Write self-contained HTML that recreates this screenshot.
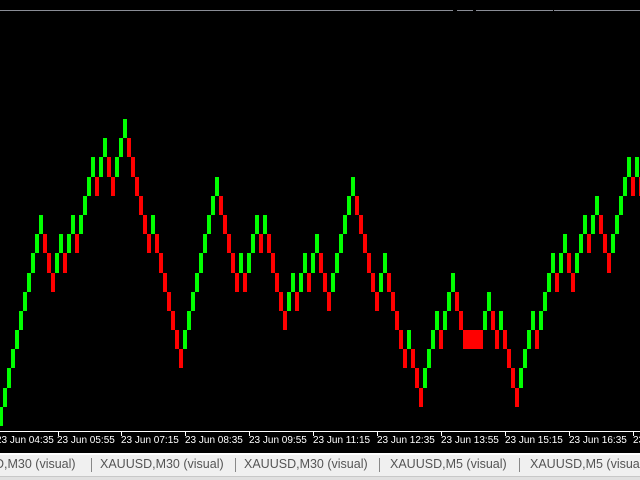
<!DOCTYPE html>
<html><head><meta charset="utf-8"><style>
html,body{margin:0;padding:0;background:#000;width:640px;height:480px;overflow:hidden;position:relative;font-family:"Liberation Sans",sans-serif}
.b{position:absolute;width:4px}
.g{background:#00ff00}.r{background:#ff0000}
.lbl{position:absolute;top:435px;color:#fff;font-size:10px;white-space:nowrap}
.tk{position:absolute;top:432px;width:1px;height:4px;background:#fff}
.tab{position:absolute;top:457px;color:#555;font-size:12.5px;white-space:nowrap}
.sep{position:absolute;top:458px;width:1px;height:14px;background:#888}
</style></head><body>
<div style="position:absolute;left:0;top:10px;width:640px;height:1px;background:#8a8d96"></div>
<div style="position:absolute;left:453px;top:10px;width:4px;height:1px;background:#000"></div>
<div style="position:absolute;left:473px;top:10px;width:3px;height:1px;background:#000"></div>
<div style="position:absolute;left:553px;top:10px;width:1px;height:1px;background:#000"></div>
<div id="c"></div>
<div style="position:absolute;left:0;top:431px;width:640px;height:1px;background:#fff"></div>
<div class="lbl" style="left:-4px">23 Jun 04:35</div>
<div class="tk" style="left:58px"></div><div class="lbl" style="left:57px">23 Jun 05:55</div>
<div class="tk" style="left:121px"></div><div class="lbl" style="left:121px">23 Jun 07:15</div>
<div class="tk" style="left:185px"></div><div class="lbl" style="left:185px">23 Jun 08:35</div>
<div class="tk" style="left:249px"></div><div class="lbl" style="left:249px">23 Jun 09:55</div>
<div class="tk" style="left:313px"></div><div class="lbl" style="left:313px">23 Jun 11:15</div>
<div class="tk" style="left:377px"></div><div class="lbl" style="left:377px">23 Jun 12:35</div>
<div class="tk" style="left:441px"></div><div class="lbl" style="left:441px">23 Jun 13:55</div>
<div class="tk" style="left:505px"></div><div class="lbl" style="left:505px">23 Jun 15:15</div>
<div class="tk" style="left:569px"></div><div class="lbl" style="left:569px">23 Jun 16:35</div>
<div class="tk" style="left:633px"></div><div class="lbl" style="left:633px">23 Jun 17:55</div>
<div style="position:absolute;left:0;top:453px;width:640px;height:2px;background:#fff"></div>
<div style="position:absolute;left:0;top:455px;width:640px;height:21px;background:#f0f0f0"></div>
<div style="position:absolute;left:0;top:476px;width:640px;height:4px;background:#e0e0e0;border-top:1px solid #c8c8c8"></div>
<div class="tab" style="left:-5px">D,M30 (visual)</div>
<div class="sep" style="left:91px"></div>
<div class="tab" style="left:100px">XAUUSD,M30 (visual)</div>
<div class="sep" style="left:235px"></div>
<div class="tab" style="left:244px">XAUUSD,M30 (visual)</div>
<div class="sep" style="left:379px"></div>
<div class="tab" style="left:390px">XAUUSD,M5 (visual)</div>
<div class="sep" style="left:519px"></div>
<div class="tab" style="left:530px">XAUUSD,M5 (visual)</div>
<script>
var s="G15 G14 G13 G12 G11 G10 G9 G8 G7 G6 G5 R6 R7 R8 G7 G6 R7 G6 G5 R6 G5 G4 G3 G2 R3 G2 G1 R2 R3 G2 G1 G0 R1 R2 R3 R4 R5 R6 G5 R6 R7 R8 R9 R10 R11 R12 G11 G10 G9 G8 G7 G6 G5 G4 G3 R4 R5 R6 R7 R8 G7 R8 G7 G6 G5 R6 G5 R6 R7 R8 R9 R10 G9 G8 R9 G8 G7 R8 G7 G6 R7 R8 R9 G8 G7 G6 G5 G4 G3 R4 R5 R6 R7 R8 R9 G8 G7 R8 R9 R10 R11 R12 G11 R12 R13 R14 G13 G12 G11 G10 R11 G10 G9 G8 R9 R10 R11 R11 R11 R11 R11 G10 G9 R10 R11 G10 R11 R12 R13 R14 G13 G12 G11 G10 R11 G10 G9 G8 G7 R8 G7 G6 R7 R8 G7 G6 G5 R6 G5 G4 R5 R6 R7 G6 G5 G4 G3 G2 R3 G2 R3".split(" ");
var h="";
function b(n){return Math.round(119+19.19*n);}
for(var k=0;k<s.length;k++){var c=s[k][0]=="G"?"g":"r";var n=+s[k].slice(1);var t=b(n);
h+='<div class="b '+c+'" style="left:'+(4*k-1)+'px;top:'+t+'px;height:'+(b(n+1)-t)+'px"></div>';}
document.getElementById("c").innerHTML=h;
</script>
</body></html>
